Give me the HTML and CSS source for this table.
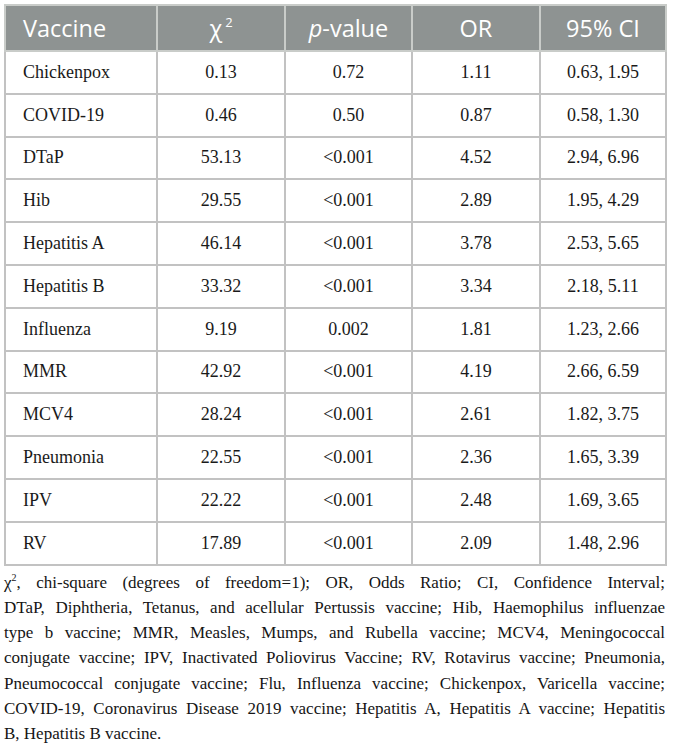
FILE: index.html
```html
<!DOCTYPE html>
<html lang="en">
<head>
<meta charset="utf-8">
<title>Vaccine table</title>
<link rel="stylesheet" href="styles.css">
</head>
<body>
<div class="wrap">
  <table class="data">
    <colgroup>
      <col class="c1"><col class="c2"><col class="c3"><col class="c4"><col class="c5">
    </colgroup>
    <thead>
      <tr>
        <th class="left">Vaccine</th>
        <th>χ<sup>2</sup></th>
        <th><i>p</i>-value</th>
        <th>OR</th>
        <th>95% CI</th>
      </tr>
    </thead>
    <tbody>
      <tr><td class="left">Chickenpox</td><td>0.13</td><td>0.72</td><td>1.11</td><td>0.63, 1.95</td></tr>
      <tr><td class="left">COVID-19</td><td>0.46</td><td>0.50</td><td>0.87</td><td>0.58, 1.30</td></tr>
      <tr><td class="left">DTaP</td><td>53.13</td><td>&lt;0.001</td><td>4.52</td><td>2.94, 6.96</td></tr>
      <tr><td class="left">Hib</td><td>29.55</td><td>&lt;0.001</td><td>2.89</td><td>1.95, 4.29</td></tr>
      <tr><td class="left">Hepatitis A</td><td>46.14</td><td>&lt;0.001</td><td>3.78</td><td>2.53, 5.65</td></tr>
      <tr><td class="left">Hepatitis B</td><td>33.32</td><td>&lt;0.001</td><td>3.34</td><td>2.18, 5.11</td></tr>
      <tr><td class="left">Influenza</td><td>9.19</td><td>0.002</td><td>1.81</td><td>1.23, 2.66</td></tr>
      <tr><td class="left">MMR</td><td>42.92</td><td>&lt;0.001</td><td>4.19</td><td>2.66, 6.59</td></tr>
      <tr><td class="left">MCV4</td><td>28.24</td><td>&lt;0.001</td><td>2.61</td><td>1.82, 3.75</td></tr>
      <tr><td class="left">Pneumonia</td><td>22.55</td><td>&lt;0.001</td><td>2.36</td><td>1.65, 3.39</td></tr>
      <tr><td class="left">IPV</td><td>22.22</td><td>&lt;0.001</td><td>2.48</td><td>1.69, 3.65</td></tr>
      <tr><td class="left">RV</td><td>17.89</td><td>&lt;0.001</td><td>2.09</td><td>1.48, 2.96</td></tr>
    </tbody>
  </table>
  <p class="note">
    <span class="ln">χ<sup>2</sup>, chi-square (degrees of freedom=1); OR, Odds Ratio; CI, Confidence Interval;</span>
    <span class="ln">DTaP, Diphtheria, Tetanus, and acellular Pertussis vaccine; Hib, Haemophilus influenzae</span>
    <span class="ln">type b vaccine; MMR, Measles, Mumps, and Rubella vaccine; MCV4, Meningococcal</span>
    <span class="ln">conjugate vaccine; IPV, Inactivated Poliovirus Vaccine; RV, Rotavirus vaccine; Pneumonia,</span>
    <span class="ln">Pneumococcal conjugate vaccine; Flu, Influenza vaccine; Chickenpox, Varicella vaccine;</span>
    <span class="ln">COVID-19, Coronavirus Disease 2019 vaccine; Hepatitis A, Hepatitis A vaccine; Hepatitis</span>
    <span class="ln last">B, Hepatitis B vaccine.</span>
  </p>
</div>
</body>
</html>
```
FILE: styles.css
```css
html, body {
  margin: 0;
  padding: 0;
  background: #ffffff;
}

.wrap {
  padding: 4px 9px 0 4px;
}

.data {
  width: 661px;
  border-collapse: collapse;
  table-layout: fixed;
  font-family: "Liberation Serif", "Times New Roman", serif;
  color: #1a1a1a;
}

.c1 { width: 152px; }
.c2 { width: 128px; }
.c3 { width: 127px; }
.c4 { width: 128px; }
.c5 { width: 126px; }

.data th {
  background: #8e9392;
  color: #ffffff;
  font-family: "Open Sans", "Noto Sans", sans-serif;
  font-weight: 400;
  font-size: 23.5px;
  height: 44px;
  padding: 0 6px;
  text-align: center;
  vertical-align: middle;
  border: 2px solid #c9ccc9;
}

.data th + th {
  border-left-color: #a3a7a6;
}

.data th sup {
  font-size: 13px;
  vertical-align: 10px;
  line-height: 0;
  margin-left: 3px;
}

.data td {
  height: 40.8px;
  padding: 0 8px;
  font-size: 18px;
  text-align: center;
  vertical-align: middle;
  border: 2px solid #c2c2c2;
}

.data .left {
  text-align: left;
  padding-left: 17px;
}

.note {
  margin: 4px 0 0 0;
  width: 661px;
  font-family: "Liberation Serif", "Times New Roman", serif;
  font-size: 17px;
  line-height: 25.3px;
  color: #151515;
}

.note .ln {
  display: block;
  text-align: justify;
  text-align-last: justify;
  white-space: nowrap;
}

.note .ln.last {
  text-align-last: left;
}

.note sup {
  font-size: 10px;
  vertical-align: 7px;
  line-height: 0;
}
```
